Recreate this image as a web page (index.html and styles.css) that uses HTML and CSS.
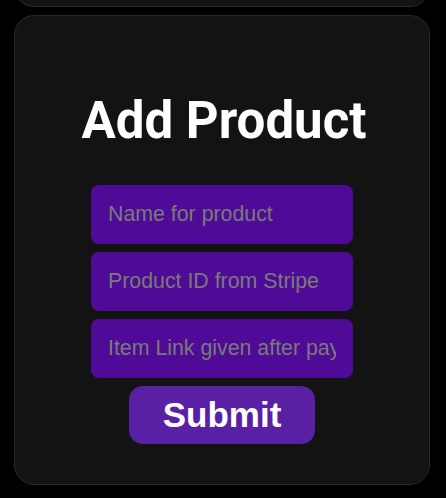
FILE: index.html
```html
<!DOCTYPE html>
<html>
<head>
<meta charset="utf-8">
<link rel="stylesheet" href="styles.css">
</head>
<body>
<div class="list">
  <div class="card card-prev"></div>
  <div class="card">
    <h1 class="title">Add Product</h1>
    <form class="form">
      <input class="field" type="text" placeholder="Name for product">
      <input class="field" type="text" placeholder="Product ID from Stripe">
      <input class="field" type="text" placeholder="Item Link given after payment">
      <button class="submit" type="button">Submit</button>
    </form>
  </div>
</div>
</body>
</html>
```
FILE: styles.css
```css
html, body {
  margin: 0;
  padding: 0;
  background: #000;
}
body {
  width: 446px;
  height: 498px;
  overflow: hidden;
}
.list {
  display: flex;
  flex-direction: column;
  gap: 8px;
  padding-left: 14px;
  margin-top: -93px;
}
.card {
  box-sizing: border-box;
  width: 416px;
  background: #131313;
  border: 1px solid #2a2a2a;
  border-radius: 20px;
  display: flex;
  flex-direction: column;
  align-items: center;
  padding: 0 0 40px;
}
.card-prev {
  height: 100px;
  padding: 0;
}
.title {
  margin: 75px 0 34px 4px;
  font-family: Roboto, "Liberation Sans", sans-serif;
  font-weight: 700;
  font-size: 51px;
  line-height: 60px;
  color: #fff;
}
.form {
  display: flex;
  flex-direction: column;
  align-items: center;
  gap: 8px;
}
.field {
  box-sizing: border-box;
  width: 262px;
  height: 59px;
  border: none;
  border-radius: 8px;
  background: #4f0b97;
  padding: 0 17px;
  font-family: "Liberation Sans", Arial, sans-serif;
  font-size: 21.33px;
  color: #fff;
  outline: none;
}
.field::placeholder {
  color: #7a7a7a;
}
.submit {
  width: 186px;
  height: 58px;
  border: none;
  border-radius: 14px;
  background: #5a20a4;
  color: #fff;
  font-family: "Liberation Sans", Arial, sans-serif;
  font-weight: 700;
  font-size: 35px;
  padding: 0;
}
```
